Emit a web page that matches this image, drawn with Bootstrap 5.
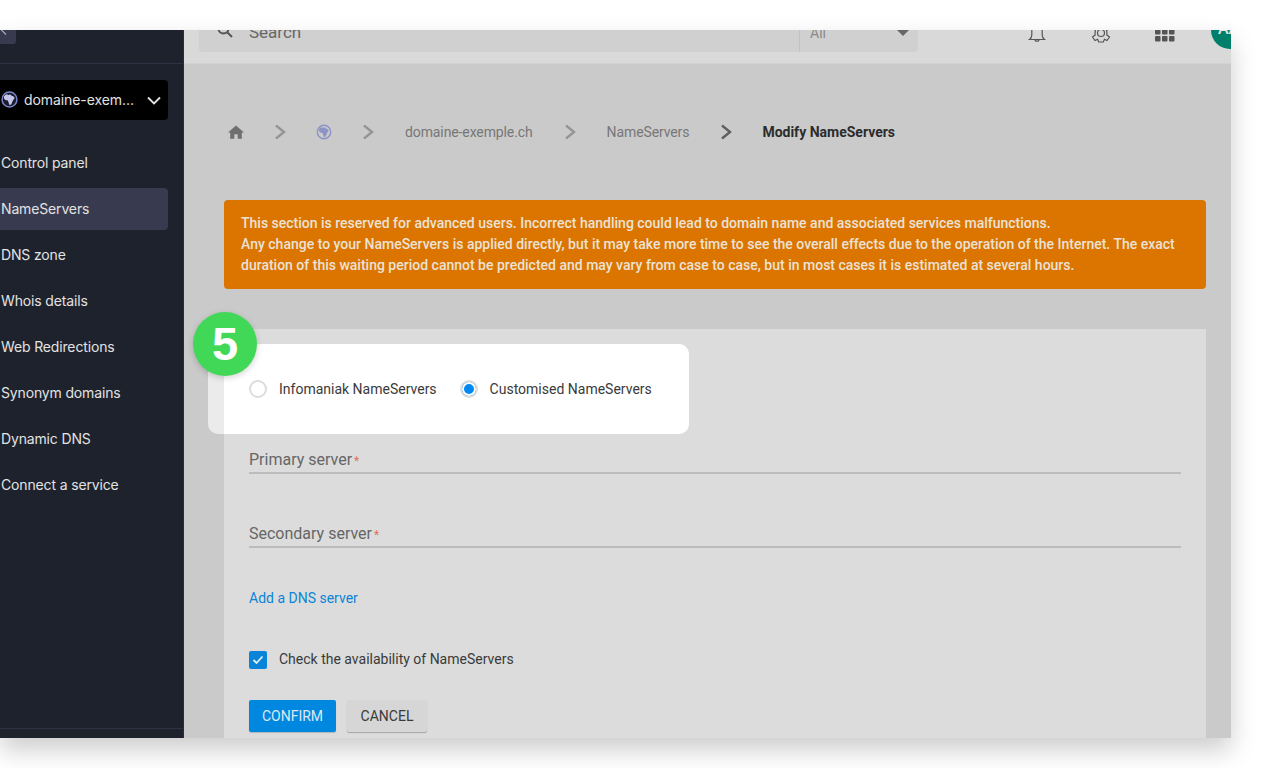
<!DOCTYPE html>
<html lang="en"><head><meta charset="utf-8"><title>Modify NameServers</title>
<link href="https://cdn.jsdelivr.net/npm/bootstrap@5.3.0/dist/css/bootstrap.min.css" rel="stylesheet">
<style>
html,body{height:100%;background:#fff;overflow:hidden}
body{font-family:Roboto,"Liberation Sans",sans-serif;font-size:14px;color:#3a3a3a}
.stage{padding-top:30px;height:768px;overflow:hidden}
.frame{width:1231px;height:708px;overflow:hidden;box-shadow:0 12px 24px rgba(0,0,0,.2);background:#cacaca}
.inner{height:738px;margin-top:-30px}
.side{width:184px;flex:none;background:#1e222d;border-right:1px solid #2a2e3c;font-family:Inter,"Liberation Sans",sans-serif;color:#e2e2e2;font-size:14px}
.side-head{height:64px;border-bottom:1px solid #2e3242}
.collapse-tab{width:16px;height:44px;background:#383b50;border-radius:0 3px 3px 0;color:#aaa}
.dom-btn{width:168px;height:40px;margin-top:16px;background:#000;border-radius:0 4px 4px 0;padding:0 7px 2px 1px;gap:6px;color:#e2e2e2;letter-spacing:-.08px}
.dom-btn svg{flex:none}
.dom-btn .chev{margin-top:2px}
.side-list{margin-top:22px;width:168px;gap:4px}
.side-link{height:42px;padding:0 0 2px 1px;color:#e2e2e2;text-decoration:none;border-radius:0 4px 4px 0;letter-spacing:-.15px}
.side-link.on{background:#383b50}
.side-foot{border-top:1px solid #2e3242;height:10px}
.top{height:64px;background:#d9d9d9;border-bottom:1px solid #d2d2d2;padding:4px 0 0 15px}
.search{width:719px;height:48px;background:#d0d0d0;border-radius:0 0 4px 4px;color:#666;font-size:17px}
.search-l{width:601px;padding:10px 0 0 18px;gap:16px;border-right:1px solid #c2c2c2;height:100%}
.search-l svg{margin-top:-6px}
.search-r{flex:1;padding:10px 9px 0 10px;font-size:14px;color:#8a8a8a}
.arrow{width:0;height:0;border:6px solid transparent;border-top:6px solid #666;margin-top:6px}
.tools{position:relative;flex:1}
.ticon{position:absolute}
.avatar{position:absolute;left:293px;top:7px;width:38px;height:38px;border-radius:50%;background:#00806a;color:#e6e6e6;font-size:16px;font-weight:500;padding:6px 0 0 7px}
.crumbs{padding:0 0 0 44px;height:136px;color:#777;font-size:14px}
.crumbs b{color:#2c2c2c;font-weight:700}
.crumbs span{margin:0 1px}
.crumbs .dom{letter-spacing:-.11px}
.crumbs .sep{margin:0 30px;flex:none}
.notice{margin:0 25px 0 40px;background:#dc7400;color:#ebe2d6;border-radius:4px;padding:13px 17px;height:89px;line-height:21px;font-size:14px;font-weight:500;border:0}
.panel{margin:40px 25px 0 40px;background:#dcdcdc;height:420px;padding:0 25px;position:relative}
.field{border-bottom:2px solid #bcbcbc;height:26px;color:#666;font-size:16px;line-height:24px}
.field-first{padding-top:119px;height:145px}
.field-next{margin-top:48px}
.field i{color:#e0705c;font-style:normal;font-size:12px;padding-left:2px}
.add-row{margin-top:40px}
.add{color:#0a84d8;text-decoration:none}
.check-row{margin-top:40px}
.tick{width:18px;height:18px;background:#0a84d8;border-radius:2px}
.btn-row{margin-top:30px;gap:11px}
.go{background:#0088e0;color:#dfe9f2;border:0;height:32px;width:87px;border-radius:2px;font-size:14px;padding:0;box-shadow:0 1px 1px rgba(0,0,0,.18)}
.stop{background:#d6d6d6;color:#3a3a3a;border:0;height:32px;width:80px;border-radius:2px;font-size:14px;padding:0;box-shadow:0 1px 1px rgba(0,0,0,.25)}
.hilite{position:absolute;left:-16px;top:15px;width:481px;height:90px;background:#ebebeb;border-radius:10px;z-index:2}
.hilite-in{margin-left:16px;height:100%;background:#fff;border-radius:0 10px 10px 0;padding:0 0 0 25px;color:#3a3a3a}
.dot{width:18px;height:18px;border-radius:50%;border:2px solid #dcdcdc;background:#fff;flex:none}
.dot.sel{background:#0088f5;box-shadow:inset 0 0 0 2px #fff;margin-left:23px}
.hilite-in label{margin:0 0 0 12px}
.step{position:absolute;left:-31px;top:-17px;width:64px;height:64px;border-radius:50%;background:#41d858;color:#fff;font-family:"Liberation Sans",Inter,sans-serif;font-weight:700;font-size:47px;line-height:64px;text-align:center;z-index:3;box-shadow:0 2px 6px rgba(0,0,0,.18)}
</style></head>
<body>
<div class="stage"><div class="frame"><div class="inner d-flex">
  <aside class="side d-flex flex-column">
    <div class="side-head"><div class="collapse-tab d-flex align-items-end justify-content-start ps-0 pb-2"><svg width="8" height="12" viewBox="0 0 8 12" fill="none" stroke="#a9a9b5" stroke-width="1.2"><path d="M6 1.500 1.500 6 6 10.500"/></svg></div></div>
    <div class="dom-btn d-flex align-items-center">
      <svg width="17" height="17" viewBox="0 0 16 16"><circle cx="8" cy="8" r="7" fill="#1a1a2a" stroke="#7d86cc" stroke-width="1.400"/><path d="M2.800 5 5 3 7.500 3.700 8.500 3 10 4.500 11.500 5 13 6.500 11.500 8.500 10.500 10.500 9.800 12.500 8 13.500 7 10.500 6.500 9 4 8.500 2.800 7Z" fill="#c3c6ea"/></svg>
      <span class="flex-grow-1 text-nowrap">domaine-exem...</span>
      <svg class="chev" width="14" height="9" viewBox="0 0 14 9" fill="none" stroke="#e6e6e6" stroke-width="1.800"><path d="M1 1.500 7 7.500 13 1.500"/></svg>
    </div>
    <nav class="side-list d-flex flex-column flex-grow-1">
      <a class="side-link d-flex align-items-center" href="#">Control panel</a>
      <a class="side-link on d-flex align-items-center" href="#">NameServers</a>
      <a class="side-link d-flex align-items-center" href="#">DNS zone</a>
      <a class="side-link d-flex align-items-center" href="#">Whois details</a>
      <a class="side-link d-flex align-items-center" href="#">Web Redirections</a>
      <a class="side-link d-flex align-items-center" href="#">Synonym domains</a>
      <a class="side-link d-flex align-items-center" href="#">Dynamic DNS</a>
      <a class="side-link d-flex align-items-center" href="#">Connect a service</a>
    </nav>
    <div class="side-foot"></div>
  </aside>
  <main class="flex-grow-1 position-relative">
    <div class="top d-flex">
      <div class="search d-flex">
        <div class="search-l d-flex align-items-center">
          <svg width="16" height="16" viewBox="0 0 16 16" fill="none" stroke="#555" stroke-width="2"><circle cx="6.500" cy="6.500" r="5"/><path d="M10.500 10.500 15 15"/></svg>
          <span>Search</span>
        </div>
        <div class="search-r d-flex align-items-center justify-content-between"><span>All</span><span class="arrow"></span></div>
      </div>
      <div class="tools">
        <svg class="ticon" style="left:110px;top:17px" width="18" height="22" viewBox="0 0 18 22" fill="none" stroke="#555" stroke-width="1.200"><path d="M9 2C5.500 2 3.800 4.500 3.800 8V14C3.800 16 2.800 17.500 1.500 18.500H16.500C15.200 17.500 14.200 16 14.200 14V8C14.200 4.500 12.500 2 9 2Z"/><path d="M7 18.500C7 20.800 11 20.800 11 18.500"/></svg>
        <svg class="ticon" style="left:173px;top:18px" width="20" height="22" viewBox="0 0 20 22" fill="none" stroke="#555" stroke-width="1.200"><circle cx="10" cy="11" r="3.500"/><path d="M8 1.500H12L12.600 4.300 15 3.200 17.500 6.500 15.600 8.500 16 11 15.800 13 18.500 15 16 18.500 13.500 17.300 12.300 20H7.700L6.600 17.300 4 18.500 1.500 15 4.200 13 4 11 4.400 8.500 2.500 6.500 5 3.200 7.400 4.300Z"/></svg>
        <svg class="ticon" style="left:237px;top:24px" width="20" height="16" viewBox="0 0 20 16" fill="#555"><rect x="0" y="1" width="5.500" height="5.500" rx="1"/><rect x="7" y="1" width="5.500" height="5.500" rx="1"/><rect x="14" y="1" width="5.500" height="5.500" rx="1"/><rect x="0" y="8" width="5.500" height="5.500" rx="1"/><rect x="7" y="8" width="5.500" height="5.500" rx="1"/><rect x="14" y="8" width="5.500" height="5.500" rx="1"/></svg>
        <div class="avatar">AA</div>
      </div>
    </div>
    <div class="crumbs d-flex align-items-center">
      <svg width="16" height="14" viewBox="0 0 16 14" fill="#6f6f6f"><path d="M8 .5 16 7.500H13.800V13.800H9.700V9.300H6.300V13.800H2.200V7.500H0Z"/></svg>
      <svg class="sep" width="12" height="16" viewBox="0 0 12 16" fill="none" stroke="#959595" stroke-width="2.400"><path d="M2 1.500 10 8 2 14.500"/></svg>
      <svg width="16" height="16" viewBox="0 0 16 16"><circle cx="8" cy="8" r="6.700" fill="#cacaca" stroke="#8d93c6" stroke-width="1.400"/><path d="M3 5 5 3.200 7.500 3.800 8.500 3.200 10 4.500 11.300 5 12.800 6.500 11.300 8.500 10.500 10.500 9.800 12.300 8 13.200 7 10.500 6.500 9 4 8.500 3 7Z" fill="#8d93c6"/></svg>
      <svg class="sep" width="12" height="16" viewBox="0 0 12 16" fill="none" stroke="#959595" stroke-width="2.400"><path d="M2 1.500 10 8 2 14.500"/></svg>
      <span class="dom">domaine-exemple.ch</span>
      <svg class="sep" width="12" height="16" viewBox="0 0 12 16" fill="none" stroke="#959595" stroke-width="2.400"><path d="M2 1.500 10 8 2 14.500"/></svg>
      <span class="dom">NameServers</span>
      <svg class="sep" width="12" height="16" viewBox="0 0 12 16" fill="none" stroke="#5f5f5f" stroke-width="2.400"><path d="M2 1.500 10 8 2 14.500"/></svg>
      <b>Modify NameServers</b>
    </div>
    <div class="alert notice mb-0" role="alert">This section is reserved for advanced users. Incorrect handling could lead to domain name and associated services malfunctions.<br>Any change to your NameServers is applied directly, but it may take more time to see the overall effects due to the operation of the Internet. The exact duration of this waiting period cannot be predicted and may vary from case to case, but in most cases it is estimated at several hours.</div>
    <section class="panel">
      <div class="step">5</div>
      <div class="hilite"><div class="hilite-in d-flex align-items-center">
        <span class="dot"></span><label>Infomaniak NameServers</label>
        <span class="dot sel"></span><label>Customised NameServers</label>
      </div></div>
      <div class="field field-first">Primary server<i>*</i></div>
      <div class="field field-next">Secondary server<i>*</i></div>
      <div class="add-row"><a class="add" href="#">Add a DNS server</a></div>
      <div class="check-row d-flex align-items-center">
        <span class="tick d-flex align-items-center justify-content-center"><svg width="12" height="10" viewBox="0 0 12 10" fill="none" stroke="#e4eef6" stroke-width="1.800"><path d="M1.500 5 4.500 8 10.500 1.500"/></svg></span>
        <span class="ms-2 ps-1">Check the availability of NameServers</span>
      </div>
      <div class="btn-row d-flex">
        <button class="btn go">CONFIRM</button>
        <button class="btn stop">CANCEL</button>
      </div>
    </section>
  </main>
</div></div></div>
</body></html>
